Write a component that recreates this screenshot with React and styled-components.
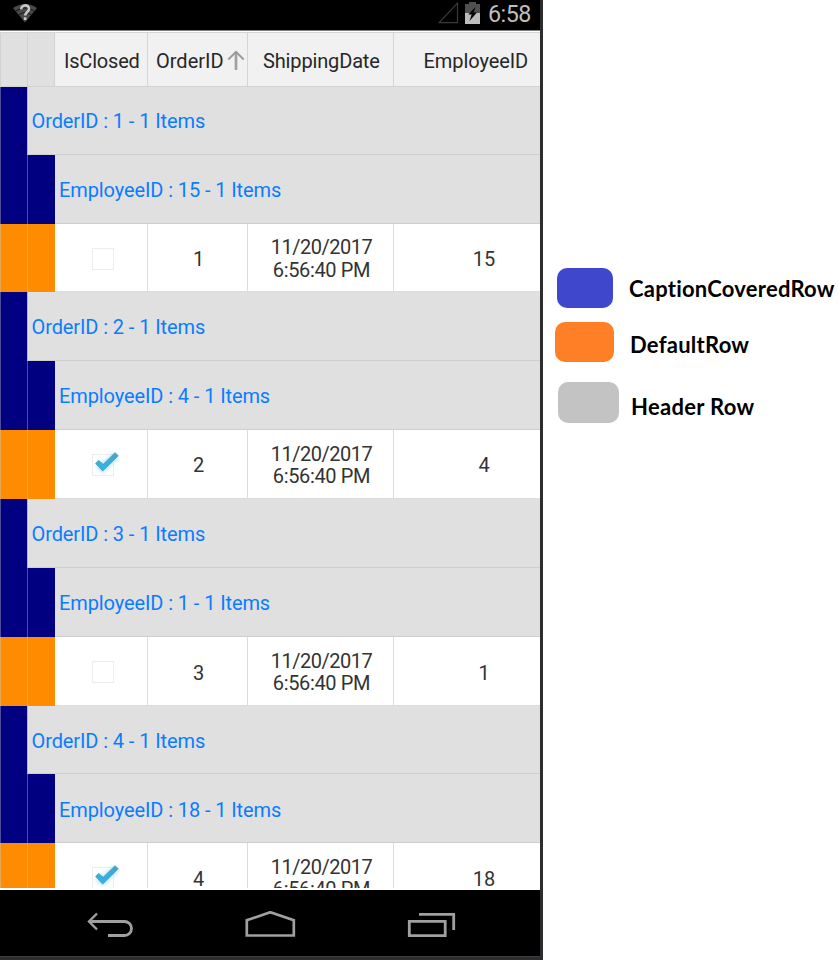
import React from 'react';
import styled, { createGlobalStyle } from 'styled-components';

const GlobalStyle = createGlobalStyle`
  * { box-sizing: border-box; }
  body { margin: 0; background: #fff; }
  svg { display: block; }
`;

const Page = styled.div`
  display: flex;
  width: 838px;
  height: 960px;
  overflow: hidden;
  background: #fff;
`;
const Phone = styled.div`
  display: flex;
  flex-direction: column;
  width: 543px;
  height: 960px;
  flex: none;
  border-right: 3px solid #2d2d2f;
  border-bottom: 3px solid #2d2d2f;
  font-family: Roboto, sans-serif;
  background: #000;
`;
const StatusBar = styled.div`
  display: flex;
  align-items: flex-start;
  height: 30px;
  flex: none;
  padding: 0 9px 0 13px;
  background: #000;
`;
const StatusIcon = styled.svg`
  flex: none;
  margin: ${(p) => p.$margin};
`;
const Clock = styled.div`
  width: 43px;
  font-size: 23.3px;
  line-height: 29px;
  letter-spacing: -0.5px;
  color: #bebebe;
  white-space: nowrap;
`;
const StatusIcons = styled.div`
  display: flex;
  margin-left: auto;
`;
const Grid = styled.div`
  height: 860px;
  flex: none;
  border-top: 1px solid #808080;
  border-bottom: 2px solid #fff;
  background: #fff;
  overflow: hidden;
`;
const HeaderRow = styled.div`
  display: flex;
  height: 55px;
  margin-top: 1px;
  border-top: 1px solid #d5d5d5;
  border-bottom: 1px solid #d2d2d2;
  background: #f1f1f1;
`;
const HeaderCell = styled.div`
  display: flex;
  align-items: center;
  width: ${(p) => p.$width}px;
  flex: none;
  padding-left: ${(p) => p.$pad}px;
  padding-top: 2px;
  border-right: ${(p) => (p.$last ? 0 : 1)}px solid #d6d6d6;
  font-size: 20px;
  line-height: 24px;
  letter-spacing: ${(p) => p.$track || 0}px;
  color: #272727;
  white-space: nowrap;
`;
const Row = styled.div`
  display: flex;
  height: ${(p) => p.$height}px;
`;
const fills = { header: '#e0e0e0', covered: '#000080', normal: '#ff8c00' };
const lines = { header: '#d2d2d2', covered: '#4c4c99', normal: '#e6a755' };
const Indent = styled.div`
  width: ${(p) => (p.$first ? 27 : 28)}px;
  flex: none;
  border-left: 1px solid ${(p) => lines[p.$kind]};
  border-right: ${(p) => (p.$kind === 'header' && !p.$first ? 1 : 0)}px solid #d2d2d2;
  background: ${(p) => fills[p.$kind]};
`;
const Caption = styled.div`
  display: flex;
  align-items: center;
  flex: 1;
  padding-left: ${(p) => (p.$nested ? 4 : 3.5)}px;
  padding-top: ${(p) => p.$drop}px;
  border-left: ${(p) => (p.$nested ? 0 : 1)}px solid #b4b4cb;
  border-bottom: 1px solid #cecece;
  background: #e0e0e0;
  font-size: 20px;
  line-height: 24px;
  letter-spacing: -0.1px;
  color: #0a7cff;
  white-space: nowrap;
`;
const Cell = styled.div`
  display: flex;
  align-items: center;
  justify-content: center;
  width: ${(p) => p.$width}px;
  flex: none;
  padding-left: ${(p) => p.$pad || 0}px;
  padding-top: ${(p) => p.$drop}px;
  border-right: ${(p) => (p.$last ? 0 : 1)}px solid #dcdcdc;
  border-bottom: 1px solid #dcdcdc;
  background: #fff;
  font-size: 20px;
  line-height: 23px;
  color: #333;
  text-align: center;
  white-space: nowrap;
`;
const DateTime = styled.div`
  display: flex;
  flex-direction: column;
  align-items: center;
`;
const DateLine = styled.span`
  line-height: 22.5px;
  letter-spacing: ${(p) => p.$track}px;
`;
const NavBar = styled.div`
  display: flex;
  align-items: center;
  height: 66px;
  flex: none;
  padding-top: 3px;
  background: #000;
`;
const BottomEdge = styled.div`
  height: 1px;
  background: #3c3c3e;
`;
const NavIcon = styled.svg`
  flex: none;
  margin-left: ${(p) => p.$gap}px;
`;
const Legend = styled.div`
  display: flex;
  flex-direction: column;
  flex: 1;
  padding-top: 268px;
`;
const LegendItem = styled.div`
  display: flex;
  align-items: flex-start;
  height: ${(p) => p.$height}px;
  padding-left: ${(p) => p.$left}px;
`;
const Swatch = styled.div`
  width: ${(p) => p.$width}px;
  height: ${(p) => p.$tall}px;
  flex: none;
  border-radius: 10px;
  background: ${(p) => p.$color};
`;
const LegendText = styled.div`
  margin: ${(p) => p.$top}px 0 0 ${(p) => p.$gap}px;
  font-family: Lato, sans-serif;
  font-weight: 700;
  font-size: 22px;
  font-variant-ligatures: none;
  line-height: 26px;
  letter-spacing: ${(p) => p.$track}px;
  color: #000;
  white-space: nowrap;
`;

const CheckBox = ({ checked }) => (
  <svg width="36" height="36" viewBox="0 0 36 36">
    <defs>
      <linearGradient id="tick" x1="0" y1="0" x2="0" y2="1">
        <stop offset="0" stopColor="#4c9fc4" />
        <stop offset="0.45" stopColor="#3aaedb" />
        <stop offset="1" stopColor="#30b4e8" />
      </linearGradient>
      <filter id="glow" x="-50%" y="-50%" width="200%" height="200%">
        <feGaussianBlur stdDeviation="2" />
      </filter>
    </defs>
    <rect x="7.5" y="7.5" width="21" height="21" fill="#fff" stroke="#ededed" />
    {checked && (
      <>
        <path d="M13 16.4l4.8 4.6L31 8.5" fill="none" stroke="#8dd8fa" strokeWidth="7" opacity="0.7" filter="url(#glow)" />
        <path d="M10.6 16.4l3-3 4.6 3.9L30 5.7l3.3 3.1-15.6 15.3z" fill="url(#tick)" stroke="#519dbc" strokeWidth="0.8" />
      </>
    )}
  </svg>
);

const groups = [
  { order: 1, employee: 15, closed: false, heights: [68, 69, 68] },
  { order: 2, employee: 4, closed: true, heights: [69, 69, 69] },
  { order: 3, employee: 1, closed: false, heights: [69, 69, 69] },
  { order: 4, employee: 18, closed: true, heights: [68, 69, 69] },
];

const Group = ({ order, employee, closed, heights }) => {
  const drop = order === 2 ? 2 : 4;
  return (
    <>
      <Row $height={heights[0]}>
        <Indent $first $kind="covered" />
        <Caption $drop={order === 1 ? 0 : 2}>OrderID : {order} - 1 Items</Caption>
      </Row>
      <Row $height={heights[1]}>
        <Indent $first $kind="covered" />
        <Indent $kind="covered" />
        <Caption $nested $drop={order === 4 ? 4 : 2}>EmployeeID : {employee} - 1 Items</Caption>
      </Row>
      <Row $height={heights[2]}>
        <Indent $first $kind="normal" />
        <Indent $kind="normal" />
        <Cell $width={93} $pad={3} $drop={2}><CheckBox checked={closed} /></Cell>
        <Cell $width={100} $pad={2} $drop={drop}>{order}</Cell>
        <Cell $width={146} $pad={2} $drop={2}>
          <DateTime>
            <DateLine $track={-0.5}>11/20/2017</DateLine>
            <DateLine $track={-0.35}>6:56:40 PM</DateLine>
          </DateTime>
        </Cell>
        <Cell $width={180} $drop={drop} $last>{employee}</Cell>
      </Row>
    </>
  );
};

export default function App() {
  return (
    <Page>
      <GlobalStyle />
      <Phone>
        <StatusBar>
          <StatusIcon $margin="3px 0 0" width="24" height="20" viewBox="0 0 24 20">
            <path d="M0 5Q12-3 24 5L12 19.5z" fill="#494949" />
            <path d="M2.5 8.3Q12 1.5 21.5 8.3M5.5 12Q12 7 18.5 12" fill="none" stroke="#171717" strokeWidth="1" />
            <path d="M8.2 6.2C8.2 1.2 16.2 1.2 16 6c0 3.2-3.8 3-3.8 6.6" fill="none" stroke="#c8c8c8" strokeWidth="2.6" />
            <rect x="10.8" y="14.3" width="2.7" height="2.7" fill="#c8c8c8" />
          </StatusIcon>
          <StatusIcons>
            <StatusIcon $margin="1px 6px 0 0" width="21" height="23" viewBox="0 0 21 23">
              <path d="M1.2 21.7H19.5V2z" fill="none" stroke="#393939" strokeWidth="1.2" />
            </StatusIcon>
            <StatusIcon $margin="2px 8px 0 0" width="15" height="22" viewBox="0 0 15 22">
              <path d="M0 2h4V0h7v2h4v10H0z" fill="#505050" />
              <path d="M0 11h15v11H0z" fill="#bdbdbd" />
              <path d="M10.5 5L3.2 12.5h3.4L4.5 19 12 10.5H8.7z" fill="#080808" />
            </StatusIcon>
            <Clock>6:58</Clock>
          </StatusIcons>
        </StatusBar>
        <Grid>
          <HeaderRow>
            <Indent $first $kind="header" />
            <Indent $kind="header" />
            <HeaderCell $width={93} $pad={9} $track={-0.2}>IsClosed</HeaderCell>
            <HeaderCell $width={100} $pad={8}>
              OrderID
              <StatusIcon $margin="0 0 0 3px" width="18" height="21" viewBox="0 0 18 21">
                <path d="M9 20V2" stroke="#a0a0a0" strokeWidth="2.7" />
                <path d="M1.3 9.5L9 1.8l7.7 7.7" fill="none" stroke="#999" strokeWidth="1.8" />
              </StatusIcon>
            </HeaderCell>
            <HeaderCell $width={146} $pad={15} $track={-0.15}>ShippingDate</HeaderCell>
            <HeaderCell $width={146} $pad={29.5} $track={-0.07} $last>EmployeeID</HeaderCell>
          </HeaderRow>
          {groups.map((g) => <Group key={g.order} {...g} />)}
        </Grid>
        <NavBar>
          <NavIcon $gap={87} width="47" height="26" viewBox="0 0 47 26">
            <path d="M2 9.5H37.5a7 7 0 0 1 0 14H21" fill="none" stroke="#a0a0a0" strokeWidth="2.8" />
            <path d="M10 1.5L2 9.5l8 8" fill="none" stroke="#a0a0a0" strokeWidth="2.4" />
          </NavIcon>
          <NavIcon $gap={111} width="51" height="28" viewBox="0 1 51 28">
            <path d="M1.8 25.5V10.3L25.3 2.2 48.8 10.3V25.5z" fill="none" stroke="#a0a0a0" strokeWidth="2.7" />
          </NavIcon>
          <NavIcon $gap={111} width="49" height="26" viewBox="0 0 49 26">
            <path d="M2.3 9.3H38.2V23.7H2.3zM12 2.3H46.7V18" fill="none" stroke="#a0a0a0" strokeWidth="2.8" />
          </NavIcon>
        </NavBar>
        <BottomEdge />
      </Phone>
      <Legend>
        <LegendItem $height={54} $left={14}>
          <Swatch $width={56} $tall={40} $color="#3f48cc" />
          <LegendText $gap={16} $top={8} $track={0.23}>CaptionCoveredRow</LegendText>
        </LegendItem>
        <LegendItem $height={60} $left={12}>
          <Swatch $width={59} $tall={40} $color="#ff7f27" />
          <LegendText $gap={16} $top={10} $track={0.25}>DefaultRow</LegendText>
        </LegendItem>
        <LegendItem $height={60} $left={15}>
          <Swatch $width={61} $tall={41} $color="#c3c3c3" />
          <LegendText $gap={12} $top={12} $track={0.3}>Header Row</LegendText>
        </LegendItem>
      </Legend>
    </Page>
  );
}
